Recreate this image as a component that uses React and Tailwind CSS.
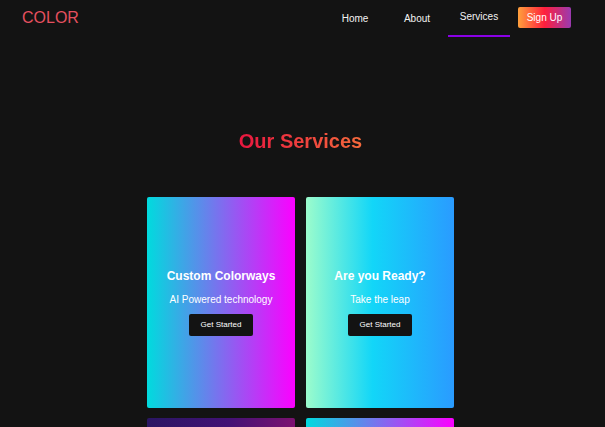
export default function App() {
  const cards = [
    { bg: "bg-[linear-gradient(to_right,#00dbde,#fc00ff)]", title: "Custom Colorways", sub: "AI Powered technology" },
    { bg: "bg-[linear-gradient(to_right,#9cfccc,#12d6f8_45%,#2a9bff)]", title: "Are you Ready?", sub: "Take the leap" },
    { bg: "bg-[linear-gradient(to_right,#2a1663,#421175_55%,#7c1170)]", title: "", sub: "" },
    { bg: "bg-[linear-gradient(to_right,#00dbde,#fc00ff)]", title: "", sub: "" },
  ];
  return (
    <div className="h-screen overflow-hidden bg-[#131313] text-white" style={{ fontFamily: '"Liberation Sans", Arial, sans-serif' }}>
      <header className="flex items-start justify-between pl-[22px] pr-[34px]">
        <div className="h-[35px] flex items-center text-[16px] text-[#e5505f]">COLOR</div>
        <nav className="flex items-start">
          <a className="w-[62px] h-[37px] flex items-center justify-center text-[10px] text-[#f2f2f2]">Home</a>
          <a className="w-[62px] h-[37px] flex items-center justify-center text-[10px] text-[#f2f2f2]">About</a>
          <a className="w-[62px] h-[37px] flex items-center justify-center pb-[3px] text-[10px] text-[#f2f2f2] border-b-2 border-[#8a00e6]">Services</a>
          <button className="ml-[8px] mt-[7px] w-[53px] h-[21px] rounded-[2px] bg-[linear-gradient(to_right,#ffa03c,#ff1f3d_50%,#9a3ab0)] text-[10px] text-white flex items-center justify-center">Sign Up</button>
        </nav>
      </header>
      <main className="pr-[4px] flex flex-col items-center">
        <h1 className="mt-[91px] text-[20px] leading-[26px] font-bold bg-[linear-gradient(to_right,#e8163f,#f56a3c)] bg-clip-text text-transparent">Our Services</h1>
        <div className="mt-[43px] grid grid-cols-[148px_148px] gap-x-[11px] gap-y-[10px]">
          {cards.map((c, i) => (
            <div key={i} className={`h-[211px] rounded-[2px] ${c.bg} flex flex-col items-center justify-center`}>
              {c.title && (
                <>
                  <div className="text-[12px] leading-[14px] font-bold text-white">{c.title}</div>
                  <div className="mt-[11px] text-[10px] leading-[12px] text-white">{c.sub}</div>
                  <button className="mt-[8px] w-[64px] h-[22px] rounded-[2px] bg-[#131313] text-[8px] text-white">Get Started</button>
                </>
              )}
            </div>
          ))}
        </div>
      </main>
    </div>
  );
}
